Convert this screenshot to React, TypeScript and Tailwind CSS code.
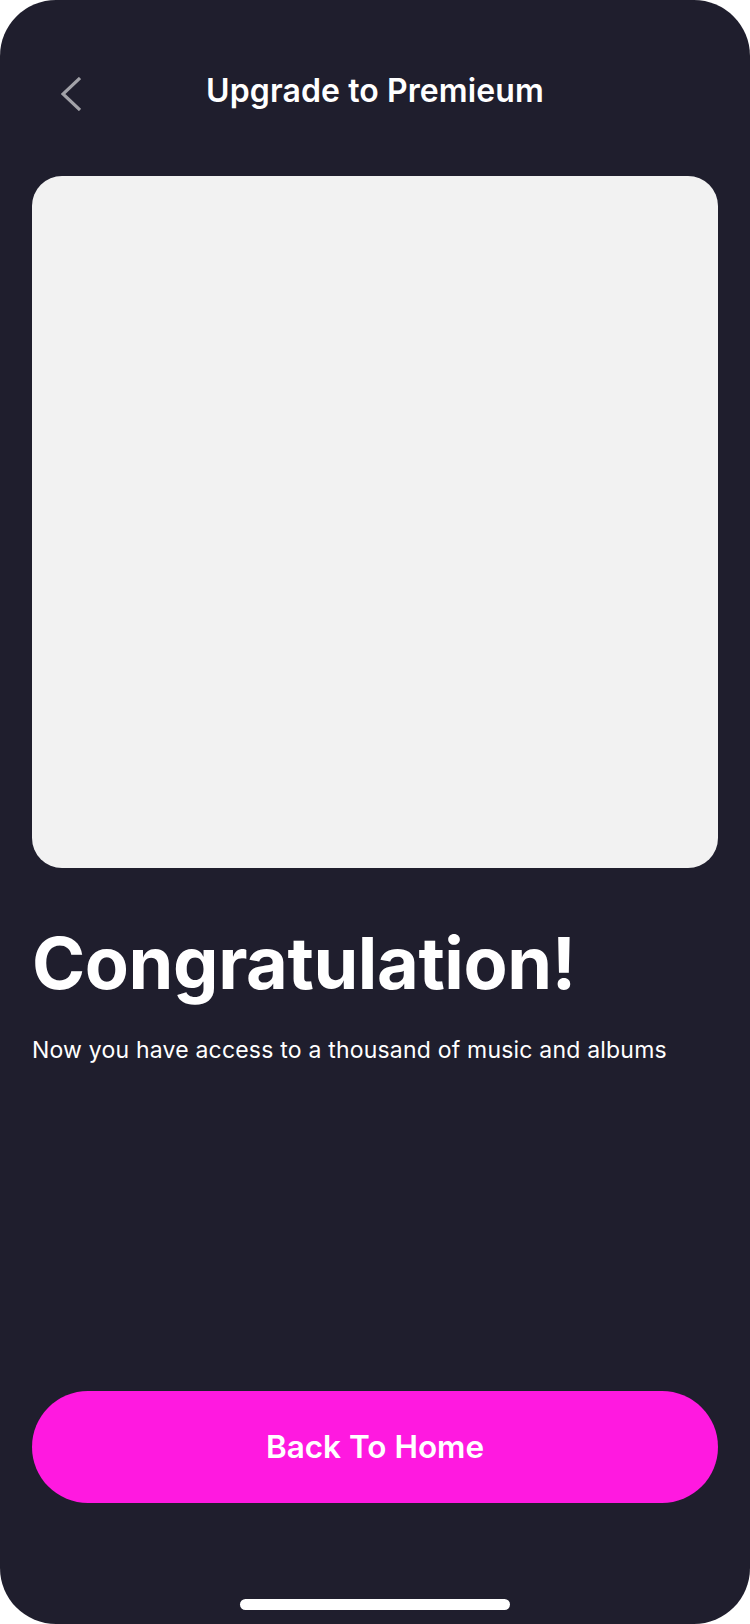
import React from "react";

export default function App() {
  return (
    <div className="w-[750px] h-[1624px] bg-white">
      <div
        className="w-full h-full rounded-[56px] bg-[#1F1E2D] flex flex-col px-[32px]"
        style={{ fontFamily: "Inter, 'Noto Sans', sans-serif" }}
      >
        <div className="relative h-[60px] mt-[64px] flex items-center justify-center">
          <button className="absolute left-[29px] top-[13px] w-[20px] h-[34px]">
            <svg width="20" height="34" viewBox="0 0 20 34" fill="none">
              <polyline points="19,1 2,17 19,33" stroke="#A2A2A8" strokeWidth="3.2" strokeLinecap="butt" strokeLinejoin="miter" />
            </svg>
          </button>
          <h1 className="text-white text-[32px] font-semibold leading-none tracking-[0.1px] -mt-[6px]">Upgrade to Premieum</h1>
        </div>

        <div className="mt-[52px] h-[692px] w-full rounded-[30px] bg-[#F2F2F2]" />

        <h2 className="mt-[47px] text-white text-[72px] font-bold leading-[96px] tracking-[-0.4px]">Congratulation!</h2>

        <p className="mt-[24px] text-white text-[23px] leading-[30px] tracking-[0.2px]">Now you have access to a thousand of music and albums</p>

        <div className="flex-1" />

        <button className="h-[112px] w-full rounded-full bg-[#FF19E0] text-white text-[31.5px] font-semibold">
          Back To Home
        </button>

        <div className="flex justify-center pt-[96px] pb-[14px]">
          <div className="w-[270px] h-[11px] rounded-full bg-white" />
        </div>
      </div>
    </div>
  );
}
